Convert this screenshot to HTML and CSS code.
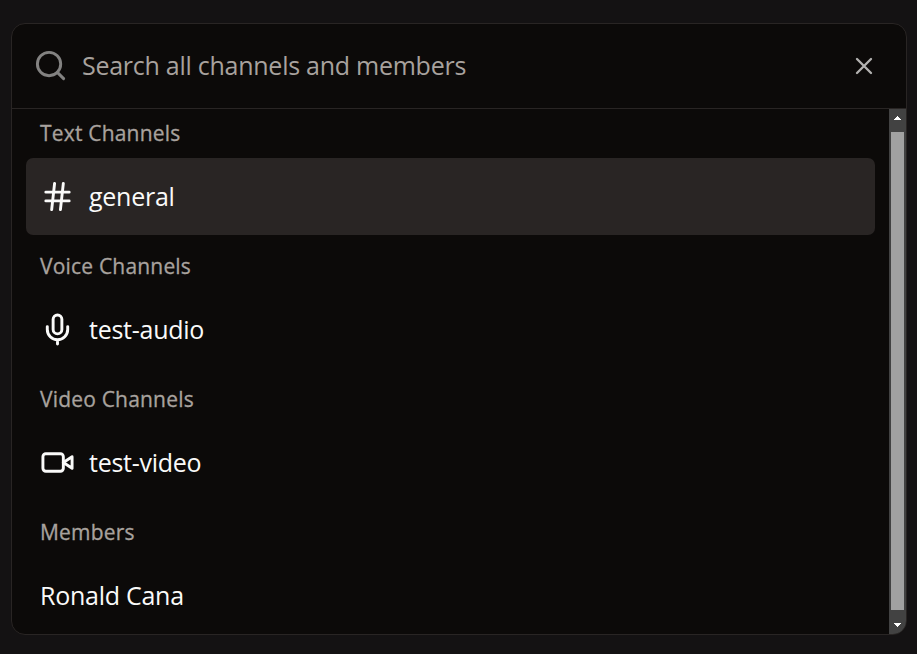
FILE: index.html
```html
<!DOCTYPE html>
<html lang="en">
<head>
<meta charset="utf-8">
<title>Search channels</title>
<link rel="stylesheet" href="styles.css">
</head>
<body>
<main class="dialog">
  <header class="search">
    <svg class="icon search-icon" viewBox="0 0 24 24"><circle cx="11" cy="11" r="8"/><path d="m21 21-4.3-4.3"/></svg>
    <span class="placeholder">Search all channels and members</span>
    <svg class="icon close" viewBox="0 0 24 24"><path d="M18 6 6 18M6 6l12 12"/></svg>
  </header>
  <div class="body">
    <div class="list">
      <section class="group">
        <h2 class="label">Text Channels</h2>
        <div class="item selected">
          <svg class="icon" viewBox="0 0 24 24"><path d="M4 9h16M4 15h16M10 3 8 21M16 3l-2 18"/></svg>
          <span>general</span>
        </div>
      </section>
      <section class="group">
        <h2 class="label">Voice Channels</h2>
        <div class="item">
          <svg class="icon" viewBox="0 0 24 24"><path d="M12 2a3 3 0 0 0-3 3v7a3 3 0 0 0 6 0V5a3 3 0 0 0-3-3Z"/><path d="M19 10v2a7 7 0 0 1-14 0v-2M12 19v3"/></svg>
          <span>test-audio</span>
        </div>
      </section>
      <section class="group">
        <h2 class="label">Video Channels</h2>
        <div class="item">
          <svg class="icon" viewBox="0 0 24 24"><path d="m22 8-6 4 6 4V8Z"/><rect x="2" y="6" width="14" height="12" rx="2"/></svg>
          <span>test-video</span>
        </div>
      </section>
      <section class="group">
        <h2 class="label">Members</h2>
        <div class="item"><span>Ronald Cana</span></div>
      </section>
    </div>
    <div class="scrollbar">
      <svg class="arrow" viewBox="0 0 7 4" shape-rendering="crispEdges"><path d="M3 0h1v1h1v1h1v1h1v1H0V3h1V2h1V1h1Z"/></svg>
      <div class="thumb"></div>
      <svg class="arrow down" viewBox="0 0 7 4" shape-rendering="crispEdges"><path d="M0 0h7v1H6v1H5v1H4v1H3V3H2V2H1V1H0Z"/></svg>
    </div>
  </div>
</main>
</body>
</html>
```
FILE: styles.css
```css
* { box-sizing: border-box; }
body {
  margin: 0;
  height: 654px;
  padding: 23px 10px 19px 11px;
  overflow: hidden;
  background: #141213;
  color: #fafaf9;
  font-family: "Open Sans", "Noto Sans", sans-serif;
}
.dialog {
  height: 612px;
  display: flex;
  flex-direction: column;
  overflow: hidden;
  background: #0c0a09;
  border: 1px solid #292524;
  border-radius: 14px;
}
.search {
  height: 85px;
  flex: none;
  display: flex;
  align-items: center;
  padding: 0 28px 0 21px;
  border-bottom: 1px solid #292524;
}
.icon {
  width: 35px;
  height: 35px;
  flex: none;
  fill: none;
  stroke: currentColor;
  stroke-width: 2;
  stroke-linecap: round;
  stroke-linejoin: round;
}
.search-icon {
  margin-bottom: 2px;
  opacity: .5;
}
.placeholder {
  flex: 1;
  margin: 0 0 2px 14px;
  font-size: 25px;
  letter-spacing: -.26px;
  line-height: 35px;
  color: #a8a29e;
}
.close {
  width: 28px;
  height: 28px;
  opacity: .7;
}
.body {
  flex: 1;
  min-height: 0;
  display: flex;
}
.list { flex: 1; }
.group { padding: 0 14px 7px; }
.label {
  margin: 0;
  padding: 10px 14px 11px;
  font-size: 21px;
  letter-spacing: .19px;
  line-height: 28px;
  font-weight: 500;
  color: #a8a29e;
  -webkit-text-stroke: .3px currentColor;
}
.item {
  height: 77px;
  display: flex;
  align-items: center;
  gap: 14px;
  padding: 0 14px;
  border-radius: 7px;
  font-size: 25px;
  letter-spacing: -.26px;
  line-height: 35px;
}
.selected { background: #292524; }
.scrollbar {
  width: 17px;
  display: flex;
  flex-direction: column;
  align-items: center;
  padding: 7px 2px;
  background: #424242;
}
.arrow {
  width: 7px;
  height: 4px;
  flex: none;
  fill: #fff;
}
.thumb {
  width: 13px;
  flex: 1;
  margin: 12px 0 13px;
  background: #a1a1a1;
}
```
